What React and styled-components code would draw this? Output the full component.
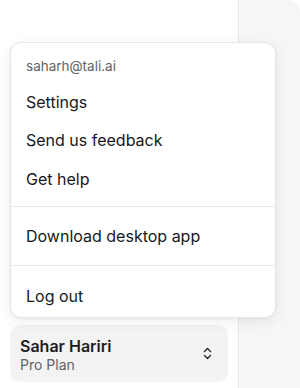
import React from "react";
import styled, { createGlobalStyle } from "styled-components";
import { ChevronsUpDown } from "lucide-react";

const Global = createGlobalStyle`
  html, body { margin: 0; padding: 0; background: #ffffff; }
  body { font-family: Inter, "Noto Sans", sans-serif; -webkit-font-smoothing: antialiased; }
  * { box-sizing: border-box; }
`;

const Page = styled.div`
  display: flex;
  width: 300px;
  height: 388px;
  overflow: hidden;
  background: #ffffff;
`;

const Sidebar = styled.aside`
  width: 239px;
  flex: none;
  display: flex;
  flex-direction: column;
  justify-content: flex-end;
  padding: 0 10px 6px 10px;
  border-right: 1px solid #e6e8ec;
  background: #ffffff;
`;

const Main = styled.main`
  flex: 1;
  background: #f6f6f6;
  border-top-right-radius: 14px;
`;

const Anchor = styled.div`
  position: relative;
`;

const Menu = styled.div`
  position: absolute;
  left: 0;
  bottom: calc(100% + 7px);
  width: 266px;
  background: #ffffff;
  border: 1px solid #e3e7ee;
  border-radius: 11px;
  box-shadow: 0 4px 14px rgba(0, 0, 0, 0.07), 0 1px 3px rgba(0, 0, 0, 0.04);
  z-index: 2;
`;

const Group = styled.div`
  display: flex;
  flex-direction: column;
  padding: ${(p) => p.$pad || "9px 0"};
  & + & {
    border-top: 1px solid #e6e9f0;
  }
`;

const Label = styled.div`
  height: 34px;
  display: flex;
  align-items: center;
  padding: 0 15px;
  font-size: 13.5px;
  color: #5f6368;
`;

const Item = styled.div`
  height: 38.5px;
  display: flex;
  align-items: center;
  padding: 0 15px;
  font-size: 16px;
  color: #16181d;
`;

const UserButton = styled.div`
  height: 57px;
  border-radius: 10px;
  background: #f3f3f3;
  display: flex;
  align-items: center;
  justify-content: space-between;
  padding: 0 12px 0 10px;
`;

const UserText = styled.div`
  display: flex;
  flex-direction: column;
  gap: 0;
  padding-top: 1px;
`;

const Name = styled.div`
  font-size: 16px;
  font-weight: 600;
  color: #1b1c1f;
`;

const Plan = styled.div`
  font-size: 14px;
  color: #5f6368;
`;

const Icon = styled(ChevronsUpDown)`
  color: #1b1c1f;
  margin-right: 1px;
`;

export default function App() {
  return (
    <>
      <Global />
      <Page>
        <Sidebar>
          <Anchor>
            <Menu>
              <Group $pad="6px 0 8px 0">
                <Label>saharh@tali.ai</Label>
                <Item>Settings</Item>
                <Item>Send us feedback</Item>
                <Item>Get help</Item>
              </Group>
              <Group $pad="10px 0 9px 0">
                <Item>Download desktop app</Item>
              </Group>
              <Group $pad="11px 0 2px 0">
                <Item>Log out</Item>
              </Group>
            </Menu>
            <UserButton>
              <UserText>
                <Name>Sahar Hariri</Name>
                <Plan>Pro Plan</Plan>
              </UserText>
              <Icon size={15} strokeWidth={2.2} />
            </UserButton>
          </Anchor>
        </Sidebar>
        <Main />
      </Page>
    </>
  );
}
